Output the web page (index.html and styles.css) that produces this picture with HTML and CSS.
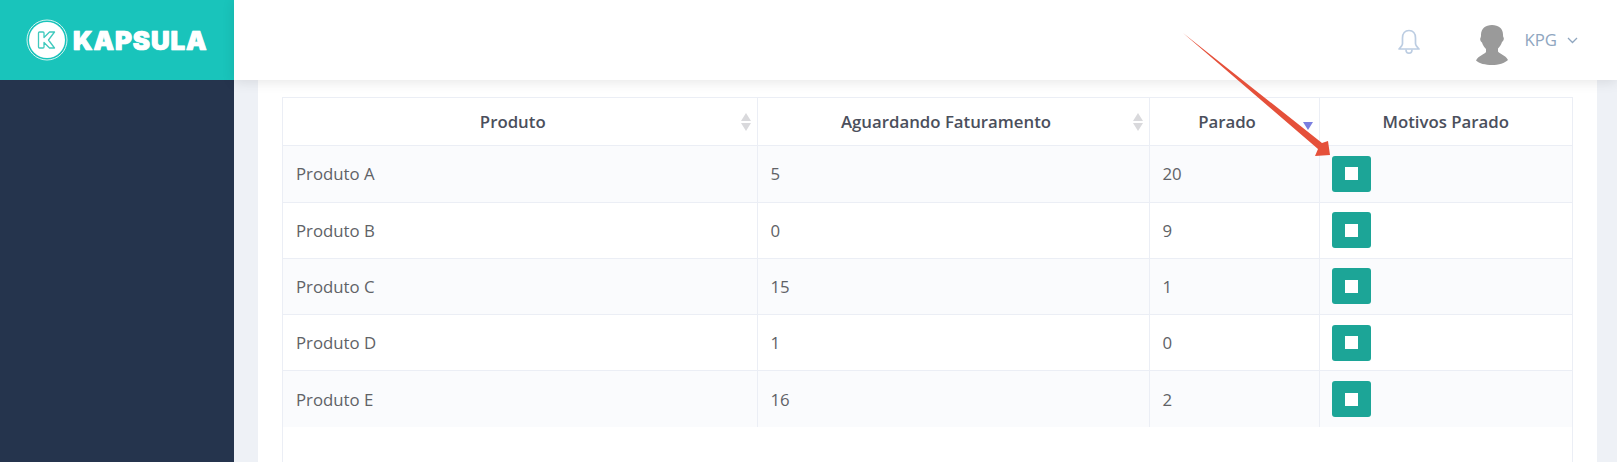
FILE: index.html
```html
<!DOCTYPE html>
<html lang="pt">
<head>
    <meta charset="UTF-8">
    <meta name="viewport" content="width=device-width, initial-scale=1.0">
    <title>Kapsula - Produtos</title>
    <link rel="stylesheet" href="styles.css">
</head>
<body>
    <div class="app">
        <aside class="sidebar">
            <div class="brand">
                <svg class="brand-mark" width="42" height="42" viewBox="0 0 42 42">
                    <circle cx="21" cy="21" r="20" fill="none" stroke="#d5f3f0" stroke-width="1"/>
                    <circle cx="21" cy="21" r="18" fill="#fff"/>
                    <path d="M13.500 13h3.500a1 1 0 0 1 1 1v4.500l5.500-5.500h5l-6 8 6 8h-5l-5.500-5.500V28a1 1 0 0 1-1 1h-3.500a1 1 0 0 1-1-1V14a1 1 0 0 1 1-1z" fill="#fff" stroke="#3fc9bd" stroke-width="1.300" stroke-linejoin="round"/>
                </svg>
                <span class="brand-name">KAPSULA</span>
            </div>
        </aside>

        <div class="main">
            <header class="topbar">
                <svg class="bell" width="24" height="26" viewBox="0 0 24 26">
                    <path d="M12 1.500c-4 0-6.500 3-6.500 7.500v5.500c0 2-1.500 3.500-3.500 5.500h20c-2-2-3.500-3.500-3.500-5.500V9c0-4.500-2.500-7.500-6.500-7.500z" fill="none" stroke="#bccde2" stroke-width="1.700" stroke-linejoin="round"/>
                    <path d="M9 20.500c0 2.200 1.300 3.700 3 3.700s3-1.500 3-3.700" fill="none" stroke="#bccde2" stroke-width="1.700"/>
                </svg>
                <svg class="avatar" width="32" height="40" viewBox="0 0 32 40">
                    <path d="M16 0c6.500 0 11 3.500 11 9.500 0 1.500.2 2.500.6 3 .6 1 .1 3.500-1.600 4.500-.8 3-2.500 5-4 6.500v3c1 2 7.500 3.500 10 8.500-3 3-9.500 5-16 5S3 38.500 0 35.500c2.500-5 9-6.500 10-8.500v-3c-1.500-1.500-3.200-3.500-4-6.500-1.700-1-2.200-3.500-1.600-4.500.4-.5.600-1.500.6-3C5 3.500 9.500 0 16 0z" fill="#9a9a9a"/>
                </svg>
                <span class="user-name">KPG</span>
                <svg class="chevron" width="11" height="7" viewBox="0 0 11 7">
                    <path d="M1 1l4.500 4.500L10 1" fill="none" stroke="#8fa6bf" stroke-width="1.300"/>
                </svg>
            </header>

            <section class="content">
                <div class="card">
                    <div class="table-wrap">
                        <table class="products">
                            <colgroup>
                                <col class="col-product">
                                <col class="col-waiting">
                                <col class="col-stopped">
                                <col>
                            </colgroup>
                            <thead>
                                <tr>
                                    <th class="sortable">Produto<span class="sort"><i class="up"></i><i class="down"></i></span></th>
                                    <th class="sortable">Aguardando Faturamento<span class="sort"><i class="up"></i><i class="down"></i></span></th>
                                    <th class="sortable">Parado<span class="sort"><i class="down active"></i></span></th>
                                    <th>Motivos Parado</th>
                                </tr>
                            </thead>
                            <tbody>
                                <tr>
                                    <td>Produto A</td><td>5</td><td>20</td>
                                    <td><button class="btn-stop"><span></span></button></td>
                                </tr>
                                <tr>
                                    <td>Produto B</td><td>0</td><td>9</td>
                                    <td><button class="btn-stop"><span></span></button></td>
                                </tr>
                                <tr>
                                    <td>Produto C</td><td>15</td><td>1</td>
                                    <td><button class="btn-stop"><span></span></button></td>
                                </tr>
                                <tr>
                                    <td>Produto D</td><td>1</td><td>0</td>
                                    <td><button class="btn-stop"><span></span></button></td>
                                </tr>
                                <tr>
                                    <td>Produto E</td><td>16</td><td>2</td>
                                    <td><button class="btn-stop"><span></span></button></td>
                                </tr>
                            </tbody>
                        </table>
                    </div>
                </div>
            </section>
        </div>
    </div>

    <svg class="arrow" width="1617" height="462" viewBox="0 0 1617 462">
        <polygon points="1183,33 1322,143 1328,141 1330,155 1315,156 1318,149" fill="#e5503a"/>
    </svg>
</body>
</html>
```

FILE: styles.css
```css
* {
    margin: 0;
    padding: 0;
    box-sizing: border-box;
    font-family: 'Open Sans', sans-serif;
}

html, body {
    height: 100%;
    overflow: hidden;
}

.app {
    display: flex;
    height: 100%;
}

.sidebar {
    width: 234px;
    flex-shrink: 0;
    background: #25344d;
}

.brand {
    height: 80px;
    background: #19c4bb;
    display: flex;
    align-items: center;
    padding-left: 26px;
    gap: 5px;
}

.brand-name {
    color: #fff;
    font-family: 'Inter', sans-serif;
    font-weight: 900;
    font-size: 26px;
    letter-spacing: 0.8px;
    -webkit-text-stroke: 0.6px #fff;
    text-shadow: 0 0 1px #fff;
}

.main {
    flex: 1;
    display: flex;
    flex-direction: column;
    min-width: 0;
    background: #eef1f6;
}

.topbar {
    height: 80px;
    flex-shrink: 0;
    background: #fff;
    box-shadow: 0 2px 12px rgba(0, 0, 0, 0.1);
    position: relative;
    z-index: 1;
    display: flex;
    align-items: center;
    justify-content: flex-end;
    padding-right: 39px;
}

.bell {
    margin-right: 55px;
    margin-top: 3px;
}

.avatar {
    margin-right: 16px;
    margin-top: 10px;
}

.user-name {
    color: #8fa6bf;
    font-size: 16.800px;
    margin-right: 10px;
    padding-bottom: 2px;
}

.content {
    flex: 1;
    padding: 0 20px 0 24px;
    display: flex;
    min-height: 0;
}

.card {
    flex: 1;
    background: #fff;
    padding: 17px 24px 0 24px;
    display: flex;
}

.table-wrap {
    flex: 1;
    border: 1px solid #ebeef5;
    border-bottom: none;
}

.products {
    width: 100%;
    border-collapse: collapse;
    table-layout: fixed;
    font-size: 16.800px;
    color: #606266;
}

.col-product {
    width: 474px;
}

.col-waiting {
    width: 392px;
}

.col-stopped {
    width: 170px;
}

.products th {
    height: 47px;
    padding-top: 1px;
    font-weight: 600;
    color: #4b4f5c;
    text-align: center;
    position: relative;
    border-left: 1px solid #ebeef5;
    border-bottom: 1px solid #ebeef5;
}

.products th.sortable {
    padding-right: 14px;
}

.products td {
    height: 56.250px;
    padding-left: 13px;
    border-left: 1px solid #ebeef5;
    border-top: 1px solid #ebeef5;
}

.products td:last-child {
    padding-left: 12px;
}

.products th:first-child,
.products td:first-child {
    border-left: none;
}

.products tbody tr:first-child td {
    height: 57px;
    border-top: none;
}

.products tbody tr:nth-child(odd) {
    background: #fafbfd;
}

.sort {
    position: absolute;
    right: 6px;
    top: 15px;
    width: 10px;
    height: 18px;
}

.sort i {
    position: absolute;
    left: 0;
    border-left: 5px solid transparent;
    border-right: 5px solid transparent;
}

.sort .up {
    top: 0;
    border-bottom: 8px solid #d9d9dc;
}

.sort .down {
    bottom: 0;
    border-top: 8px solid #d9d9dc;
}

.sort .down.active {
    bottom: 1px;
    border-top-color: #7b7fe0;
}

.btn-stop {
    width: 39px;
    height: 36px;
    background: #1ca597;
    border: none;
    border-radius: 3px;
    display: flex;
    align-items: center;
    justify-content: center;
}

.btn-stop span {
    width: 13px;
    height: 13px;
    background: #fff;
}

.arrow {
    position: absolute;
    left: 0;
    top: 0;
    z-index: 2;
    pointer-events: none;
}
```
